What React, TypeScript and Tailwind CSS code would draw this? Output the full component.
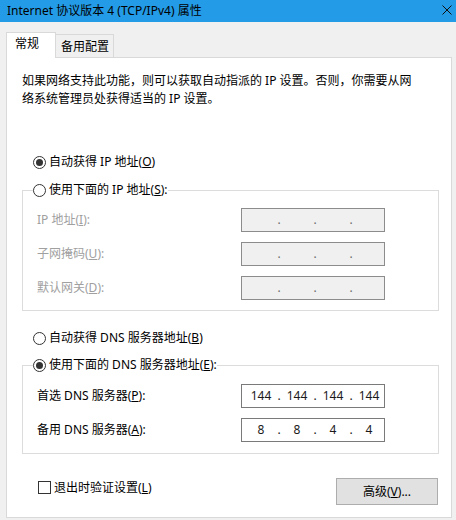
import React from "react";

const font = "font-['Noto_Sans','Noto_Sans_CJK_SC',sans-serif]";

function Radio({ checked = false }: { checked?: boolean }) {
  return (
    <span className="flex h-[13px] w-[13px] shrink-0 items-center justify-center rounded-full border border-[#333333] bg-white">
      {checked && <span className="h-[7px] w-[7px] rounded-full bg-[#333333]" />}
    </span>
  );
}

function RadioLabel({ checked, children }: { checked?: boolean; children: React.ReactNode }) {
  return (
    <span className="flex h-[18px] items-center gap-[3px] bg-white text-[12px] leading-[18px] text-black">
      <Radio checked={checked} />
      <span>{children}</span>
    </span>
  );
}

function IpBox({ parts, disabled }: { parts?: string[]; disabled?: boolean }) {
  const cells = parts ?? ["", "", "", ""];
  return (
    <div
      className={`flex h-[24px] w-[144px] items-center border pl-[4px] text-[12px] leading-none ${
        disabled ? "border-[#8c8c8c] bg-[#f0f0f0] text-[#6d6d6d]" : "border-[#7a7a7a] bg-white text-[#1a1a1a]"
      }`}
    >
      {cells.map((p, i) => (
        <React.Fragment key={i}>
          <span className="w-[30px] text-center">{p}</span>
          {i < 3 && <span className="w-[6px] text-center">.</span>}
        </React.Fragment>
      ))}
    </div>
  );
}

function FieldRow({
  label,
  disabled,
  parts,
}: {
  label: React.ReactNode;
  disabled?: boolean;
  parts?: string[];
}) {
  return (
    <div className="flex h-[24px] items-center">
      <span className={`w-[204px] text-[12px] ${disabled ? "text-[#a0a0a0]" : "text-black"}`}>{label}</span>
      <IpBox parts={parts} disabled={disabled} />
    </div>
  );
}

export default function App() {
  return (
    <div className={`flex h-[520px] w-[456px] flex-col overflow-hidden bg-[#f0f0f0] ${font}`}>
      {/* title bar */}
      <div className="flex h-[22px] shrink-0 items-center justify-between bg-[#239be6] pl-[7px] pr-[4px]">
        <span className="text-[12px] leading-none text-black">Internet 协议版本 4 (TCP/IPv4) 属性</span>
        <svg width="10" height="10" viewBox="0 0 10 10" className="mt-[-3px]">
          <path d="M0.5 0.5 L9.5 9.5 M9.5 0.5 L0.5 9.5" stroke="#111" strokeWidth="1" fill="none" />
        </svg>
      </div>

      {/* tabs */}
      <div className="relative z-10 -mb-px flex h-[36px] items-end pl-[6px]">
        <div className="flex h-[26px] w-[50px] items-start border-x border-t border-[#d9d9d9] bg-white pl-[8px] pt-[2px] text-[12px] leading-[18px] text-black">
          常规
        </div>
        <div className="mb-px flex h-[23px] w-[58px] items-start border-r border-t border-[#d9d9d9] bg-[#f0f0f0] pl-[5px] pt-[3px] text-[12px] leading-[18px] text-black">
          备用配置
        </div>
      </div>

      {/* tab page */}
      <div className="ml-[6px] flex h-[461px] w-[446px] flex-col border border-[#d9d9d9] bg-white">
        <p className="pl-[15px] pt-[14px] text-[12px] leading-[18px] text-black">
          如果网络支持此功能，则可以获取自动指派的 IP 设置。否则，你需要从网
          <br />
          络系统管理员处获得适当的 IP 设置。
        </p>

        <div className="mt-[45px] pl-[26px]">
          <RadioLabel checked>
            自动获得 IP 地址(<u>O</u>)
          </RadioLabel>
        </div>

        <fieldset className="ml-[15px] mt-[10px] w-[417px] border border-[#dcdcdc] pb-[10px]">
          <legend className="ml-[10px]">
            <RadioLabel>
              使用下面的 IP 地址(<u>S</u>):
            </RadioLabel>
          </legend>
          <div className="mt-[9px] flex flex-col gap-[10px] pl-[14px]">
            <FieldRow disabled label={<>IP 地址(<u>I</u>):</>} />
            <FieldRow disabled label={<>子网掩码(<u>U</u>):</>} />
            <FieldRow disabled label={<>默认网关(<u>D</u>):</>} />
          </div>
        </fieldset>

        <div className="mt-[18px] pl-[26px]">
          <RadioLabel>
            自动获得 DNS 服务器地址(<u>B</u>)
          </RadioLabel>
        </div>

        <fieldset className="ml-[15px] mt-[9px] w-[417px] border border-[#dcdcdc] pb-[11px]">
          <legend className="ml-[10px]">
            <RadioLabel checked>
              使用下面的 DNS 服务器地址(<u>E</u>):
            </RadioLabel>
          </legend>
          <div className="mt-[10px] flex flex-col gap-[10px] pl-[14px]">
            <FieldRow label={<>首选 DNS 服务器(<u>P</u>):</>} parts={["144", "144", "144", "144"]} />
            <FieldRow label={<>备用 DNS 服务器(<u>A</u>):</>} parts={["8", "8", "4", "4"]} />
          </div>
        </fieldset>

        <div className="ml-[15px] mt-[24px] flex w-[416px] items-start justify-between">
          <label className="mt-[3px] flex items-center gap-[3px] pl-[16px] text-[12px] leading-[13px] text-black">
            <span className="h-[13px] w-[13px] border border-[#333333] bg-white" />
            <span>
              退出时验证设置(<u>L</u>)
            </span>
          </label>
          <button className="flex h-[27px] w-[102px] items-center justify-center border border-[#adadad] bg-[#e1e1e1] text-[12px] text-black">
            高级(<u>V</u>)...
          </button>
        </div>
      </div>
    </div>
  );
}
